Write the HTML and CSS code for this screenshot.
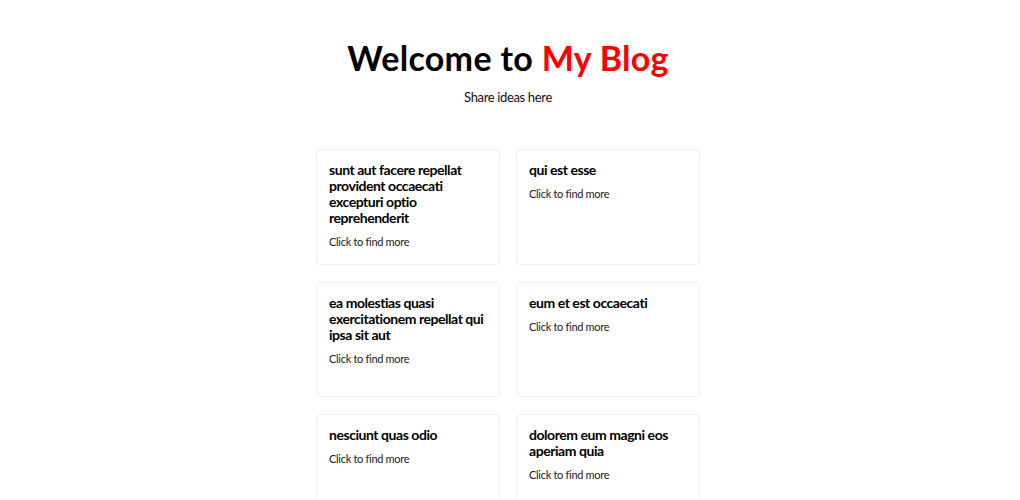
FILE: index.html
```html
<!DOCTYPE html>
<html lang="en">
<head>
<meta charset="utf-8">
<title>My Blog</title>
<link rel="stylesheet" href="styles.css">
</head>
<body>
<main class="page">
  <header class="hero">
    <h1 class="hero-title">Welcome to <span class="accent">My Blog</span></h1>
    <p class="hero-sub">Share ideas here</p>
  </header>
  <section class="posts">
    <article class="card">
      <h2 class="card-title">sunt aut facere repellat provident occaecati excepturi optio reprehenderit</h2>
      <p class="card-link">Click to find more</p>
    </article>
    <article class="card">
      <h2 class="card-title">qui est esse</h2>
      <p class="card-link">Click to find more</p>
    </article>
    <article class="card">
      <h2 class="card-title">ea molestias quasi exercitationem repellat qui ipsa sit aut</h2>
      <p class="card-link">Click to find more</p>
    </article>
    <article class="card">
      <h2 class="card-title">eum et est occaecati</h2>
      <p class="card-link">Click to find more</p>
    </article>
    <article class="card">
      <h2 class="card-title">nesciunt quas odio</h2>
      <p class="card-link">Click to find more</p>
    </article>
    <article class="card">
      <h2 class="card-title">dolorem eum magni eos aperiam quia</h2>
      <p class="card-link">Click to find more</p>
    </article>
  </section>
</main>
</body>
</html>
```

FILE: styles.css
```css
* { box-sizing: border-box; }

body {
  margin: 0;
  padding: 0 4px 0 0;
  background: #ffffff;
  color: #000;
  font-family: "Lato", "Open Sans", sans-serif;
}

.page {
  display: flex;
  flex-direction: column;
  align-items: center;
}

.hero {
  text-align: center;
  padding-top: 36px;
}

.hero-title {
  margin: 0;
  font-size: 34px;
  line-height: 44px;
  font-weight: 700;
  letter-spacing: 0.3px;
  color: #000;
}

.accent { color: #ff0000; }

.hero-sub {
  margin: 8px 0 0;
  font-size: 13px;
  line-height: 18px;
  letter-spacing: -0.35px;
  color: #111;
}

.posts {
  margin-top: 43px;
  display: grid;
  grid-template-columns: 184px 184px;
  column-gap: 16px;
  row-gap: 17px;
}

.card {
  min-height: 115px;
  border: 1px solid #eeeeee;
  border-radius: 5px;
  padding: 12px 12px 14px;
  display: flex;
  flex-direction: column;
}

.card-title {
  margin: 0;
  font-size: 14px;
  line-height: 16px;
  font-weight: 700;
  letter-spacing: -0.45px;
  color: #000;
}

.card-link {
  margin: 8px 0 0;
  font-size: 11px;
  line-height: 16px;
  letter-spacing: -0.3px;
  color: #222;
}
```
